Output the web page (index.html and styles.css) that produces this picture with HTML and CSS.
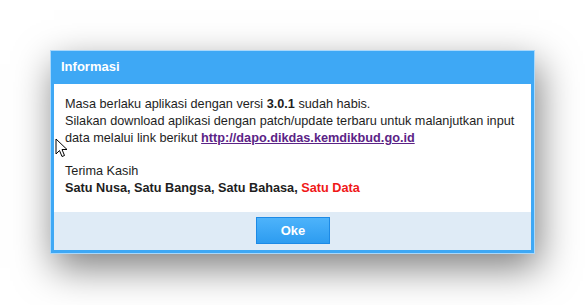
FILE: index.html
```html
<!DOCTYPE html>
<html lang="en">
<head>
    <meta charset="UTF-8">
    <title>Informasi</title>
    <link rel="stylesheet" href="styles.css">
</head>
<body>
    <div class="dialog">
        <div class="dialog-title">Informasi</div>
        <div class="dialog-body">
            <p>Masa berlaku aplikasi dengan versi <b>3.0.1</b> sudah habis.<br>
            Silakan download aplikasi dengan patch/update terbaru untuk malanjutkan input<br>
            data melalui link berikut <a href="#" class="link">http://dapo.dikdas.kemdikbud.go.id</a></p>
            <p>Terima Kasih<br>
            <span class="motto">Satu Nusa, Satu Bangsa, Satu Bahasa, <span class="red">Satu Data</span></span></p>
        </div>
        <div class="dialog-footer">
            <button type="button" class="btn-ok">Oke</button>
        </div>
    </div>

    <!-- mouse pointer -->
    <svg class="cursor" width="13" height="20" viewBox="0 0 13 20">
        <path d="M1 1 L1 16 L4.5 12.5 L7 18.5 L9.5 17.5 L7 11.5 L12 11.5 Z" fill="#fff" stroke="#000" stroke-width="1"/>
    </svg>
</body>
</html>
```
FILE: styles.css
```css
html, body {
    height: 100%;
}
body {
    margin: 0;
    min-height: 305px;
    background: #fff;
    font-family: Arial, "Liberation Sans", sans-serif;
    font-size: 12.7px;
    color: #1e1e1e;
    overflow: hidden;
}
.dialog {
    width: 477px;
    margin: 50px 0 0 50px;
    border: 4px solid #3ea8f5;
    border-top: 0;
    outline: 1px solid #a9d8fb;
    outline-offset: -1px;
    box-shadow: 4px 14px 36px rgba(0, 0, 0, 0.5);
}
.dialog-title {
    height: 34px;
    line-height: 34px;
    background-color: #3ea8f5;
    color: #fff;
    font-weight: bold;
    font-size: 13px;
    padding-left: 7px;
}
.dialog-body {
    background: #fff;
    height: 128px;
    padding: 12px 11px 0 11px;
    box-sizing: border-box;
    line-height: 17px;
    white-space: nowrap;
}
.dialog-body p {
    margin: 0 0 16px 0;
}
.link {
    color: #5b2386;
    font-weight: bold;
}
.motto {
    font-weight: bold;
}
.red {
    color: #f01818;
}
.dialog-footer {
    background: #dfebf6;
    height: 38px;
    padding-left: 202px;
    padding-top: 5px;
    box-sizing: border-box;
}
.btn-ok {
    width: 74px;
    height: 27px;
    background: linear-gradient(#4db3fb, #2d9cf0);
    border: 1px solid #1c8ae6;
    color: #fff;
    font-family: Arial, "Liberation Sans", sans-serif;
    font-weight: bold;
    font-size: 13px;
    padding: 0;
}
.cursor {
    position: absolute;
    left: 55px;
    top: 138px;
}
```
